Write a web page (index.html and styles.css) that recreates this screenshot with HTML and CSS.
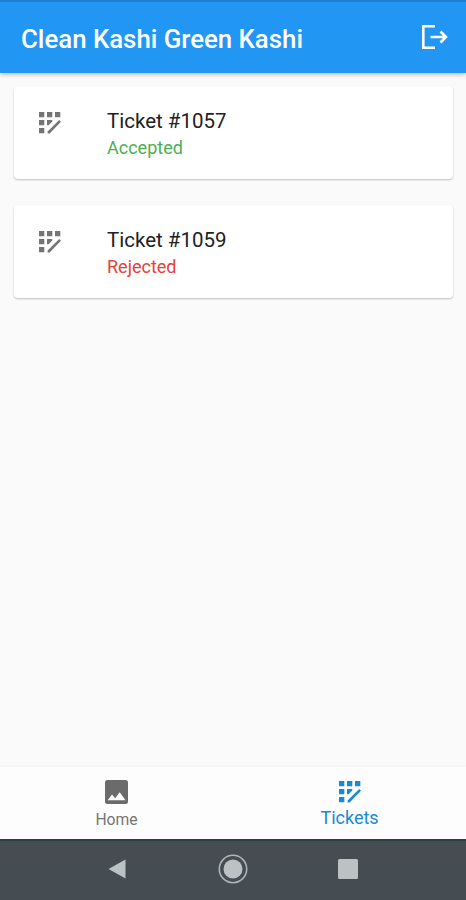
FILE: index.html
```html
<!DOCTYPE html>
<html lang="en">
<head>
  <meta charset="UTF-8" />
  <meta name="viewport" content="width=device-width, initial-scale=1" />
  <title>Clean Kashi Green Kashi</title>
  <link rel="stylesheet" href="styles.css">
</head>
<body>

  <!-- app registration icon, used in the list and in the bottom nav -->
  <svg class="hidden" aria-hidden="true">
    <symbol id="ticket-icon" viewBox="0 0 22 22">
      <path d="M0 0h5.3v5.3H0zM8 0h5.3v5.3H8zM16 0h5.3v5.3H16zM0 8h5.3v5.3H0zM0 16h5.3v5.3H0zM8 8h5.3v1.6L9.6 13.3H8z" />
      <path d="M8.6 21.6v-2.2L20.2 8l1.8 1.8L10.600 21.600z" />
    </symbol>
  </svg>

  <header class="app-bar">
    <h1 class="app-title">Clean Kashi Green Kashi</h1>
    <svg class="logout-icon" viewBox="0 0 26 24">
      <path d="M13 1.3H1.3v21.4H13M8.5 12H24M18.5 6.5L24 12l-5.5 5.5" />
    </svg>
  </header>

  <main class="ticket-list">
    <div class="ticket-card">
      <svg class="ticket-icon"><use href="#ticket-icon" /></svg>
      <div>
        <div class="ticket-name">Ticket #1057</div>
        <div class="ticket-status accepted">Accepted</div>
      </div>
    </div>
    <div class="ticket-card">
      <svg class="ticket-icon"><use href="#ticket-icon" /></svg>
      <div>
        <div class="ticket-name">Ticket #1059</div>
        <div class="ticket-status rejected">Rejected</div>
      </div>
    </div>
  </main>

  <nav class="bottom-nav">
    <a class="nav-item">
      <svg class="home-icon" viewBox="0 0 23 24">
        <path fill-rule="evenodd" d="M2.5 0h18A2.5 2.5 0 0 1 23 2.5v19a2.5 2.5 0 0 1-2.5 2.5h-18A2.5 2.5 0 0 1 0 21.5v-19A2.5 2.5 0 0 1 2.5 0zM2.7 20.300h17.800L14.700 12.300l-4.500 6-3.200-3.900z" />
      </svg>
      <span class="nav-label">Home</span>
    </a>
    <a class="nav-item active">
      <svg class="ticket-icon"><use href="#ticket-icon" /></svg>
      <span class="nav-label">Tickets</span>
    </a>
  </nav>

  <footer class="system-bar">
    <svg class="system-icon" viewBox="0 0 30 30">
      <path d="M5.5 15L22.5 5.5v19z" />
    </svg>
    <svg class="system-icon" viewBox="0 0 30 30">
      <circle cx="15" cy="15" r="13.7" class="ring" />
      <circle cx="15" cy="15" r="9.5" />
    </svg>
    <svg class="system-icon" viewBox="0 0 30 30">
      <rect x="5" y="5" width="20" height="20" rx="1.5" />
    </svg>
  </footer>

</body>
</html>
```
FILE: styles.css
```css
* {
  box-sizing: border-box;
}

body {
  margin: 0;
  height: 100vh;
  display: flex;
  flex-direction: column;
  overflow: hidden;
  background-color: #fafafa;
  color: #212121;
  font-family: Roboto, sans-serif;
}

.hidden {
  display: none;
}

.app-bar {
  height: 73px;
  flex-shrink: 0;
  display: flex;
  align-items: center;
  justify-content: space-between;
  padding: 2px 18px 0 21px;
  border-top: 2px solid #1d80d2;
  background-color: #2196f3;
  color: #fff;
  box-shadow: 0 1px 5px rgba(0, 0, 0, 0.3);
}

.app-title {
  margin: 0;
  font-size: 25.8px;
  font-weight: 500;
  line-height: 32px;
  white-space: nowrap;
}

.logout-icon {
  width: 26px;
  height: 24px;
  margin-bottom: 3px;
  fill: none;
  stroke: #fff;
  stroke-width: 2.6;
}

.ticket-list {
  flex: 1;
  display: flex;
  flex-direction: column;
  gap: 26px;
  padding: 13px 13px 0 14px;
}

.ticket-card {
  height: 93px;
  display: flex;
  padding: 21px 25px;
  border-radius: 4px;
  background-color: #fff;
  box-shadow: 0 1px 2px rgba(0, 0, 0, 0.24);
}

.ticket-icon {
  width: 22px;
  height: 22px;
  fill: #757575;
}

.ticket-card .ticket-icon {
  margin: 5px 46px 0 0;
}

.ticket-name {
  font-size: 20.5px;
  line-height: 28px;
}

.ticket-status {
  font-size: 18px;
  line-height: 25px;
}

.accepted {
  color: #4caf50;
}

.rejected {
  color: #e5423a;
}

.bottom-nav {
  height: 72px;
  flex-shrink: 0;
  display: flex;
  background-color: #fdfdfd;
  box-shadow: 0 -1px 3px rgba(0, 0, 0, 0.04);
}

.nav-item {
  flex: 1;
  display: flex;
  flex-direction: column;
  align-items: center;
  padding-top: 13px;
  color: #757575;
  font-size: 15.7px;
}

.nav-item.active {
  color: #1689d8;
  font-size: 18px;
}

.nav-item.active .ticket-icon {
  margin-top: 1px;
  fill: #1689d8;
}

.home-icon {
  width: 23px;
  height: 24px;
  fill: #6b6b6b;
}

.nav-label {
  margin-top: 5px;
  line-height: 20px;
}

.home-icon + .nav-label {
  margin-top: 6px;
}

.system-bar {
  height: 61px;
  flex-shrink: 0;
  display: flex;
  justify-content: center;
  align-items: center;
  gap: 85px;
  padding-bottom: 3px;
  border-top: 2px solid #2e3d3f;
  background-color: #454d53;
}

.system-icon {
  width: 30px;
  height: 30px;
  fill: #bcc1c3;
}

.ring {
  fill: none;
  stroke: #aeb4b7;
  stroke-width: 1.6;
}
```
